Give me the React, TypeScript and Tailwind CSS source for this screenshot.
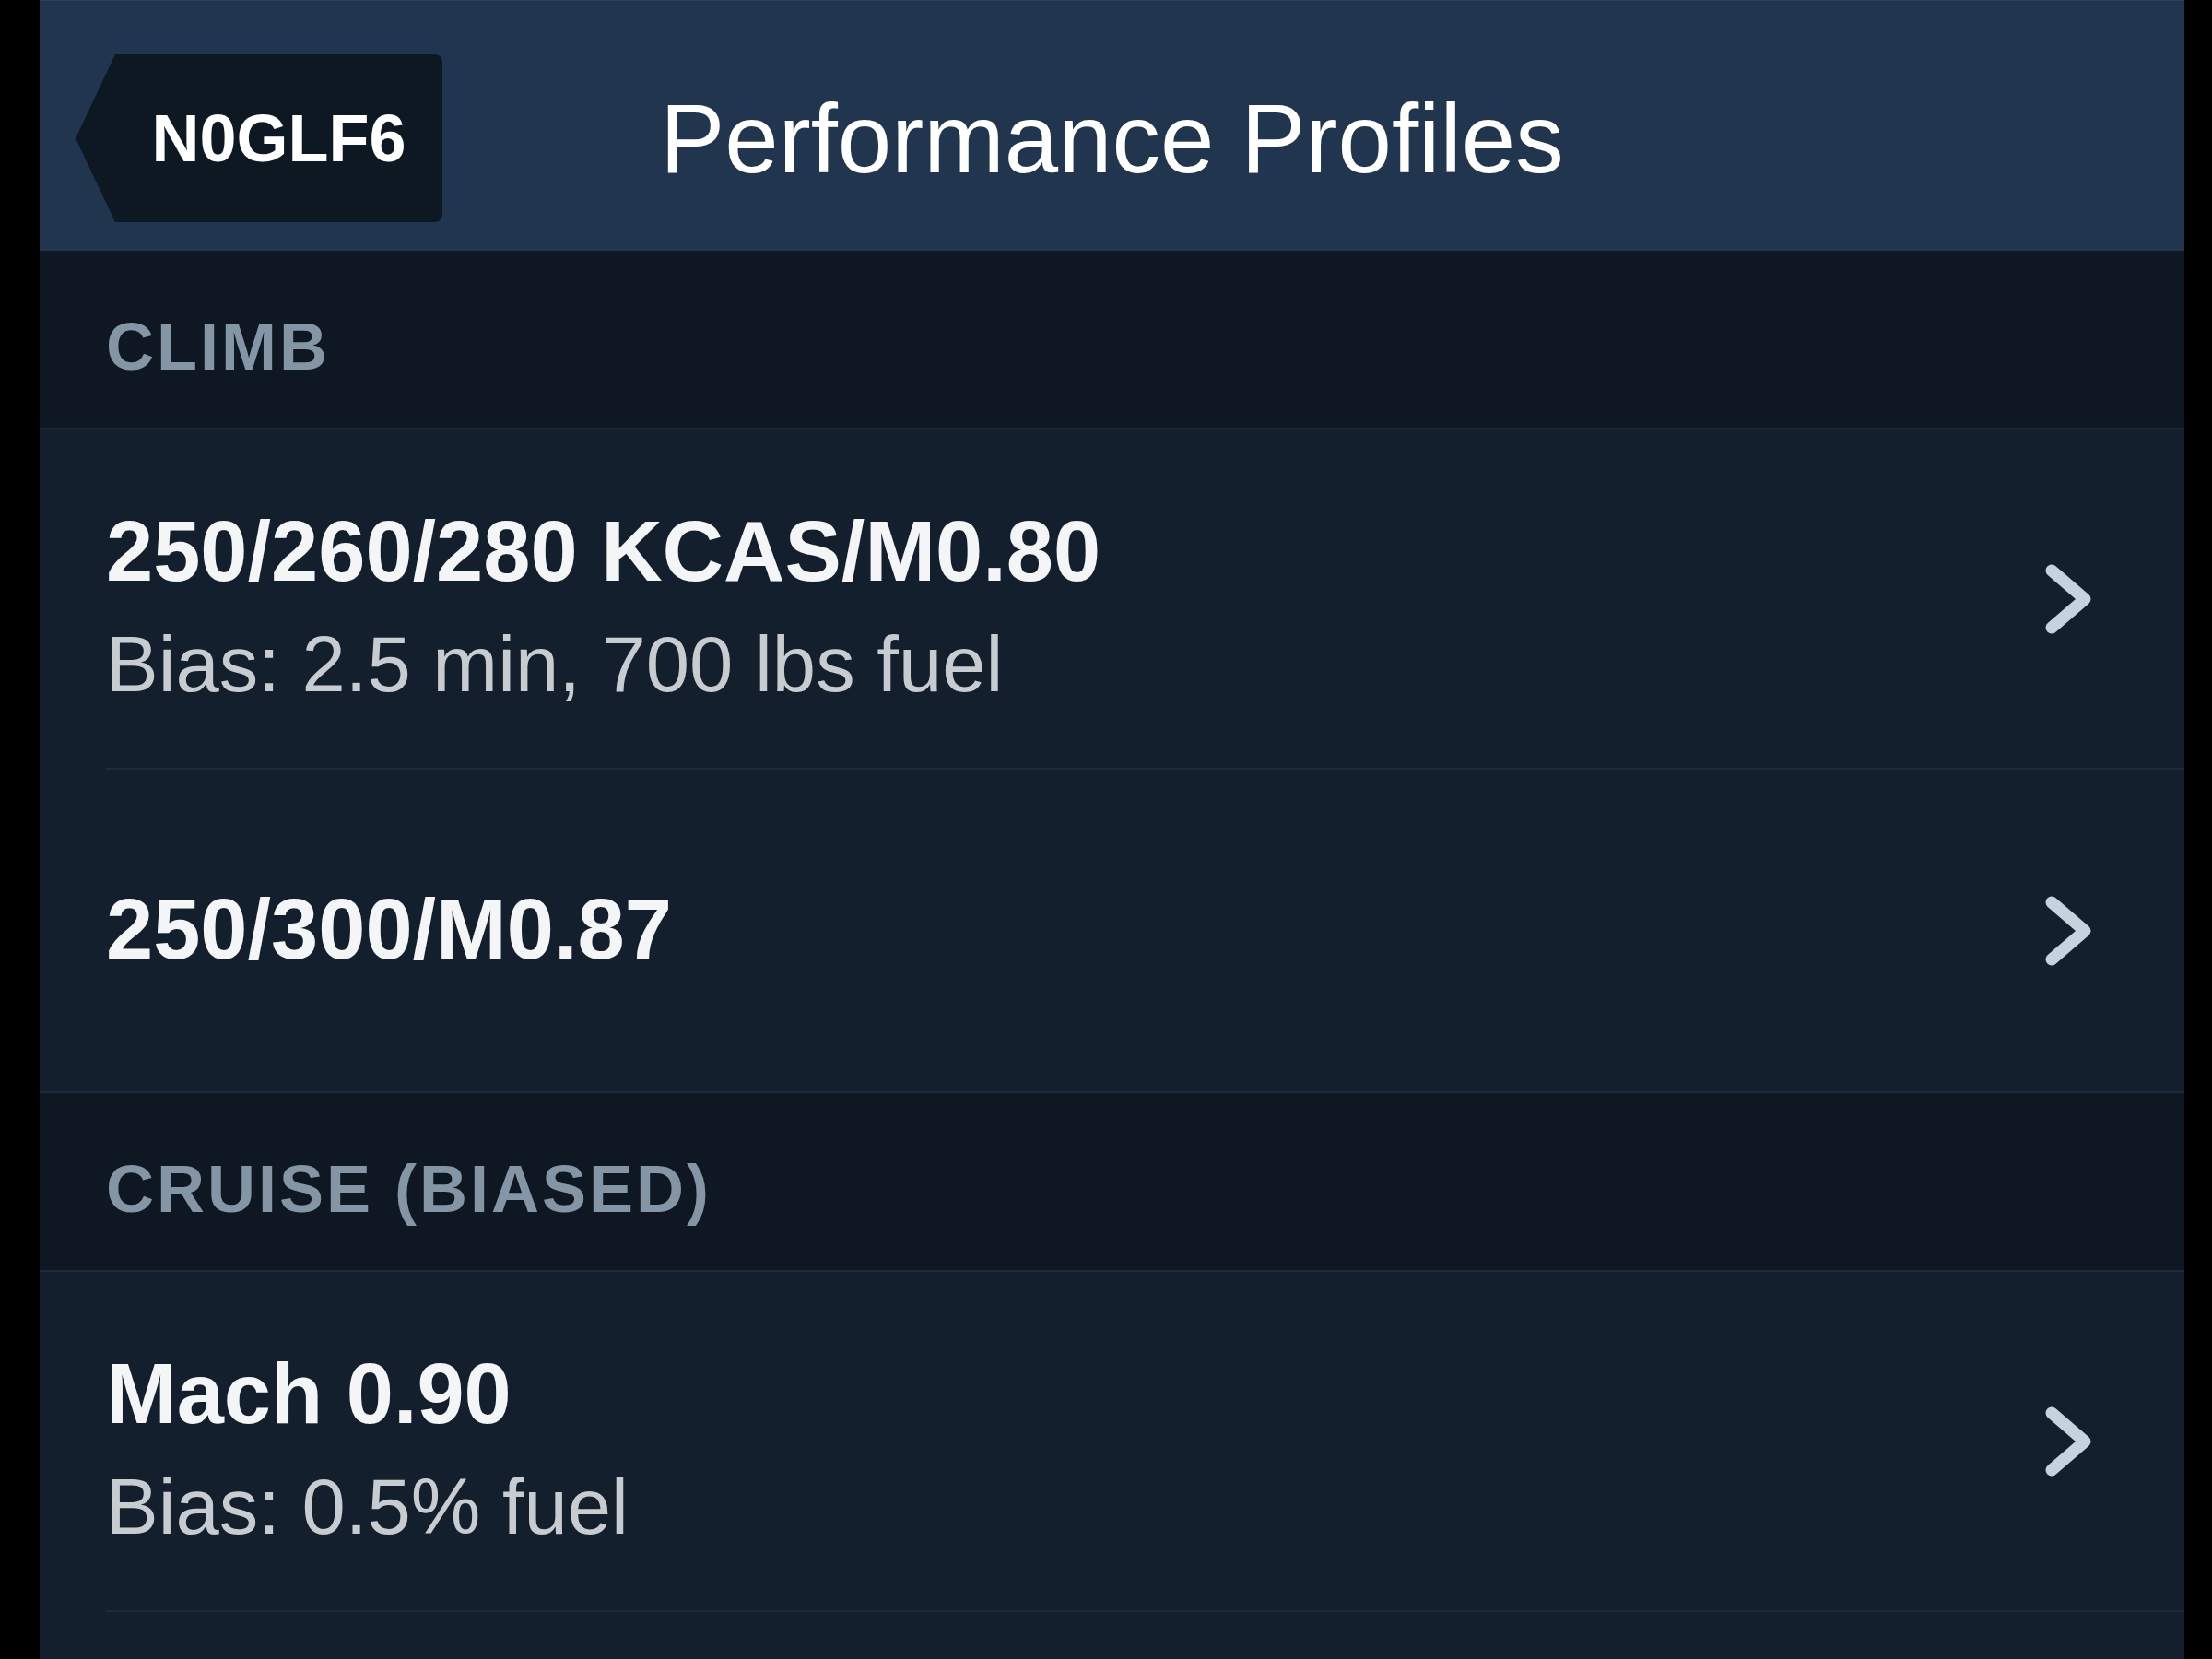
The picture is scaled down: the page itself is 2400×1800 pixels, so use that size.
import { ReactNode } from "react";

const sans = "font-['Liberation_Sans',Arial,Helvetica,sans-serif]";

function Chevron() {
  return (
    <svg width="52" height="78" viewBox="0 0 52 78" fill="none" className="shrink-0">
      <path
        d="M8 8 L44 39 L8 70"
        stroke="#c6d2de"
        strokeWidth="13"
        strokeLinecap="round"
        strokeLinejoin="round"
      />
    </svg>
  );
}

function SectionHeader({ children }: { children: ReactNode }) {
  return (
    <div className="flex h-[194px] items-center border-b-2 border-[#1c2a3a] bg-[#0e1722] pl-[72px] pt-4">
      <span className={`${sans} text-[72px] font-bold leading-none tracking-[3px] text-[#8495a6]`}>
        {children}
      </span>
    </div>
  );
}

function Row({
  title,
  sub,
  inset = true,
}: {
  title: string;
  sub?: string;
  inset?: boolean;
}) {
  return (
    <div className="flex flex-col bg-[#131f2d]">
      <div
        className={`flex items-center pl-[72px] pr-[100px] ${sub ? "h-[367px]" : "h-[349px]"}`}
      >
        {sub ? (
          <div className="flex flex-1 flex-col self-stretch pt-[86px]">
            <div className={`${sans} text-[92px] font-bold leading-none text-[#f4f5f6]`}>
              {title}
            </div>
            <div className={`${sans} mt-[34px] text-[85px] leading-none text-[#c8ccd1]`}>
              {sub}
            </div>
          </div>
        ) : (
          <div className={`${sans} flex-1 pb-[4px] text-[92px] font-bold leading-none text-[#f4f5f6]`}>
            {title}
          </div>
        )}
        <Chevron />
      </div>
      <div className={`h-[2px] bg-[#1c2a3a] ${inset ? "ml-[72px]" : ""}`} />
    </div>
  );
}

export default function App() {
  return (
    <div className="flex h-[1800px] w-[2400px] overflow-hidden bg-black">
      <div className="w-[43px] shrink-0 bg-black" />
      <main className="flex w-[2327px] shrink-0 flex-col bg-[#131f2d]">
        <header className="grid h-[272px] grid-cols-[1fr_auto_1fr] items-center border-t border-[#2b4360] bg-[#21354e] pb-[31px] pt-[58px]">
          <div className="flex">
            <button className="ml-[39px] flex h-[182px] w-[398px] items-center justify-center rounded-r-lg bg-[#0e1823] pl-[43px] [clip-path:polygon(43px_0,100%_0,100%_100%,43px_100%,0_50%)]">
              <span className={`${sans} text-[72px] font-bold leading-none text-white`}>
                N0GLF6
              </span>
            </button>
          </div>
          <h1 className={`${sans} text-[105px] font-normal leading-none text-white`}>
            Performance Profiles
          </h1>
          <div />
        </header>

        <SectionHeader>CLIMB</SectionHeader>
        <Row title="250/260/280 KCAS/M0.80" sub="Bias: 2.5 min, 700 lbs fuel" />
        <Row title="250/300/M0.87" inset={false} />

        <SectionHeader>CRUISE (BIASED)</SectionHeader>
        <Row title="Mach 0.90" sub="Bias: 0.5% fuel" />
        <div className="flex-1 bg-[#131f2d]" />
      </main>
      <div className="w-[30px] shrink-0 bg-black" />
    </div>
  );
}
